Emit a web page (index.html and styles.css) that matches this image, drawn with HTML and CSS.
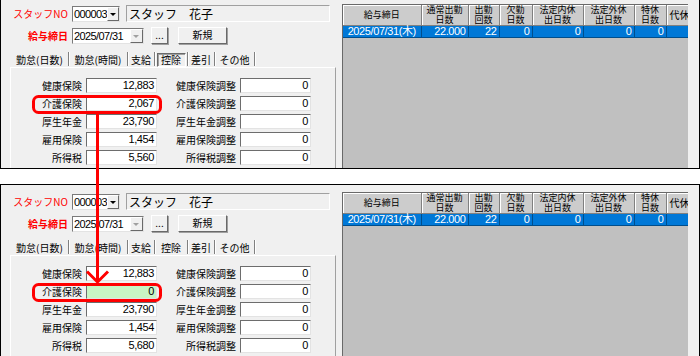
FILE: index.html
```html
<!DOCTYPE html>
<html lang="ja">
<head>
    <meta charset="UTF-8">
    <title>控除の修正</title>
    <link rel="stylesheet" href="styles.css">
</head>
<body>
<div class="shot">

    <!-- 修正前 -->
    <div class="panel panel-cut">
        <div class="form">
            <div class="head-row">
                <span class="req">スタッフNO</span>
                <span class="combo combo-staff"><span class="combo-text num">000003</span><span class="drop"></span></span>
                <span class="name-field">スタッフ　花子</span>
            </div>
            <div class="head-row">
                <span class="req bold">給与締日</span>
                <span class="combo combo-date"><span class="combo-text num">2025/07/31</span><span class="drop off"></span></span>
                <span class="btn btn-dots">...</span>
                <span class="btn btn-new">新規</span>
            </div>
            <div class="tabs">
                <span class="tab t1">勤怠(日数)</span>
                <span class="tab t2">勤怠(時間)</span>
                <span class="tab t3">支給</span>
                <span class="tab t4 on"><span>控除</span></span>
                <span class="tab t5">差引</span>
                <span class="tab t6">その他</span>
            </div>
            <div class="tab-page">
                <span class="lbl">健康保険</span><span class="val num">12,883</span>
                <span class="lbl">健康保険調整</span><span class="val num">0</span>
                <span class="lbl">介護保険</span><span class="val num">2,067</span>
                <span class="lbl">介護保険調整</span><span class="val num">0</span>
                <span class="lbl">厚生年金</span><span class="val num">23,790</span>
                <span class="lbl">厚生年金調整</span><span class="val num">0</span>
                <span class="lbl">雇用保険</span><span class="val num">1,454</span>
                <span class="lbl">雇用保険調整</span><span class="val num">0</span>
                <span class="lbl">所得税</span><span class="val num">5,560</span>
                <span class="lbl">所得税調整</span><span class="val num">0</span>
                <span class="lbl"></span><span class="val num"></span>
            </div>
        </div>
        <div class="grid">
            <table>
                <colgroup>
                    <col style="width:78px"><col style="width:47px"><col style="width:31px"><col style="width:33px">
                    <col style="width:51px"><col style="width:51px"><col style="width:32px"><col style="width:40px">
                </colgroup>
                <tr>
                    <th>給与締日</th><th>通常出勤<br>日数</th><th>出勤<br>回数</th><th>欠勤<br>日数</th>
                    <th>法定内休<br>出日数</th><th>法定外休<br>出日数</th><th>特休<br>日数</th><th class="left">代休</th>
                </tr>
                <tr class="sel">
                    <td class="center">2025/07/31(木)</td><td>22.000</td><td>22</td><td>0</td>
                    <td>0</td><td>0</td><td>0</td><td>0</td>
                </tr>
            </table>
        </div>
    </div>

    <!-- 修正後 -->
    <div class="panel">
        <div class="form">
            <div class="head-row">
                <span class="req">スタッフNO</span>
                <span class="combo combo-staff"><span class="combo-text num">000003</span><span class="drop"></span></span>
                <span class="name-field">スタッフ　花子</span>
            </div>
            <div class="head-row">
                <span class="req bold">給与締日</span>
                <span class="combo combo-date"><span class="combo-text num">2025/07/31</span><span class="drop off"></span></span>
                <span class="btn btn-dots">...</span>
                <span class="btn btn-new">新規</span>
            </div>
            <div class="tabs">
                <span class="tab t1">勤怠(日数)</span>
                <span class="tab t2">勤怠(時間)</span>
                <span class="tab t3">支給</span>
                <span class="tab t4"><span>控除</span></span>
                <span class="tab t5">差引</span>
                <span class="tab t6">その他</span>
            </div>
            <div class="tab-page">
                <span class="lbl">健康保険</span><span class="val num">12,883</span>
                <span class="lbl">健康保険調整</span><span class="val num">0</span>
                <span class="lbl">介護保険</span><span class="val num changed">0</span>
                <span class="lbl">介護保険調整</span><span class="val num">0</span>
                <span class="lbl">厚生年金</span><span class="val num">23,790</span>
                <span class="lbl">厚生年金調整</span><span class="val num">0</span>
                <span class="lbl">雇用保険</span><span class="val num">1,454</span>
                <span class="lbl">雇用保険調整</span><span class="val num">0</span>
                <span class="lbl">所得税</span><span class="val num">5,680</span>
                <span class="lbl">所得税調整</span><span class="val num">0</span>
                <span class="lbl"></span><span class="val num"></span>
            </div>
        </div>
        <div class="grid">
            <table>
                <colgroup>
                    <col style="width:78px"><col style="width:47px"><col style="width:31px"><col style="width:33px">
                    <col style="width:51px"><col style="width:51px"><col style="width:32px"><col style="width:40px">
                </colgroup>
                <tr>
                    <th>給与締日</th><th>通常出勤<br>日数</th><th>出勤<br>回数</th><th>欠勤<br>日数</th>
                    <th>法定内休<br>出日数</th><th>法定外休<br>出日数</th><th>特休<br>日数</th><th class="left">代休</th>
                </tr>
                <tr class="sel">
                    <td class="center">2025/07/31(木)</td><td>22.000</td><td>22</td><td>0</td>
                    <td>0</td><td>0</td><td>0</td><td>0</td>
                </tr>
            </table>
        </div>
    </div>

    <!-- 赤枠と矢印 -->
    <svg class="marks" width="700" height="356" viewBox="0 0 700 356">
        <rect x="33.5" y="96.5" width="127" height="16" rx="5" fill="none" stroke="#f00" stroke-width="3"/>
        <rect x="33.5" y="284.5" width="127" height="16" rx="5" fill="none" stroke="#f00" stroke-width="3"/>
        <line x1="97.5" y1="114" x2="97.5" y2="281" stroke="#f00" stroke-width="3"/>
        <polyline points="87,271.5 97.5,282 108,271.5" fill="none" stroke="#f00" stroke-width="3"/>
    </svg>
</div>
</body>
</html>
```

FILE: styles.css
```css
* {
    box-sizing: border-box;
}

body {
    margin: 0;
    background: #fff;
    font-family: "Noto Sans CJK JP", sans-serif;
    font-size: 10px;
    color: #000;
}

.shot {
    position: relative;
    width: 700px;
    height: 356px;
    overflow: hidden;
}

/* パネル */
.panel {
    display: flex;
    height: 173px;
    border: 1px solid #000;
    background: #f0f0f0;
    overflow: hidden;
    padding-top: 7px;
}

.panel-cut {
    margin-top: -4px;
}

.panel + .panel {
    margin-top: 15px;
}

.form {
    width: 335px;
    flex: none;
    padding-top: 1px;
    display: flex;
    flex-direction: column;
}

.num {
    font-family: "Liberation Sans", sans-serif;
    font-size: 11px;
    letter-spacing: -0.4px;
}

/* ヘッダ部 */
.head-row {
    display: flex;
    align-items: center;
    height: 17px;
}

.head-row + .head-row {
    margin-top: 5px;
}

.req {
    width: 67px;
    margin-right: 4px;
    text-align: right;
    color: #f00;
}

.bold {
    font-weight: bold;
}

.combo {
    display: flex;
    height: 16px;
    background: #fff;
    border: 1px solid;
    border-color: #7a7a7a #e3e3e3 #e3e3e3 #7a7a7a;
}

.combo-staff {
    width: 48px;
}

.combo-date {
    width: 72px;
}

.combo-text {
    flex: 1;
    padding-left: 1px;
    line-height: 14px;
    letter-spacing: -0.6px;
    white-space: nowrap;
}

.drop {
    width: 12px;
    flex: none;
    background: #f0f0f0;
    border: 1px solid;
    border-color: #fff #696969 #696969 #fff;
    position: relative;
}

.drop::after {
    content: "";
    position: absolute;
    left: 2px;
    top: 5px;
    border-left: 3px solid transparent;
    border-right: 3px solid transparent;
    border-top: 3px solid #000;
}

.drop.off::after {
    border-top-color: #a0a0a0;
}

.combo-date .drop {
    width: 13px;
}

.name-field {
    width: 204px;
    height: 17px;
    margin-left: 6px;
    padding-left: 2px;
    border: 1px solid;
    border-color: #a0a0a0 #fff #fff #a0a0a0;
    font-size: 12px;
    line-height: 15px;
}

.btn {
    height: 17px;
    background: #f0f0f0;
    border: 1px solid;
    border-color: #fff #696969 #696969 #fff;
    box-shadow: 1px 1px 0 #a0a0a0;
    text-align: center;
    line-height: 14px;
}

.btn-dots {
    width: 17px;
    margin-left: 7px;
}

.btn-new {
    width: 49px;
    margin-left: 10px;
}

/* タブ */
.tabs {
    display: flex;
    height: 16px;
    margin-top: 7px;
    margin-left: 10px;
}

.tab {
    display: flex;
    align-items: center;
    justify-content: center;
    border-right: 1px solid #808080;
    box-shadow: 1px 0 0 #fff;
    margin: 1px 0;
    padding-top: 1px;
}

.t1 { width: 58px; }
.t2 { width: 59px; }
.t3 { width: 27px; }
.t4 { width: 33px; }
.t5 { width: 27px; }
.t6 { width: 40px; }

.tab > span {
    display: block;
    width: 29px;
    height: 14px;
    line-height: 12px;
    text-align: center;
    border: 1px solid transparent;
}

.tab.on > span {
    border-color: #696969 #fff #fff #696969;
    box-shadow: inset 1px 1px 0 #a0a0a0;
}

.tab-page {
    flex: 1;
    width: 326px;
    margin-left: 9px;
    border: 1px solid;
    border-color: #fff #a0a0a0 #a0a0a0 #fff;
    padding-top: 10px;
    display: grid;
    grid-template-columns: 71px 71px 75px 71px;
    grid-auto-rows: 15px;
    column-gap: 4px;
    row-gap: 3px;
}

.lbl {
    text-align: right;
    line-height: 15px;
}

.val {
    background: #fff;
    border: 1px solid;
    border-color: #6d6d6d #e3e3e3 #e3e3e3 #6d6d6d;
    text-align: right;
    padding-right: 2px;
    line-height: 13px;
}

.val.changed {
    background: #c8f5c4;
}

/* 一覧 */
.grid {
    width: 346px;
    margin-left: 6px;
    flex: none;
    background: #c0c0c0;
    border-left: 1px solid #696969;
    border-top: 1px solid #696969;
    overflow: hidden;
}

.grid table {
    border-collapse: collapse;
    table-layout: fixed;
    width: 363px;
}

.grid th {
    height: 20px;
    padding: 0;
    background: #cccccc;
    border-right: 1px solid #808080;
    border-bottom: 1px solid #808080;
    box-shadow: inset 1px 1px 0 #fff;
    font-weight: normal;
    font-size: 9px;
    line-height: 10px;
    text-align: center;
    white-space: nowrap;
}

.grid th.left {
    text-align: left;
    padding-left: 3px;
    font-size: 10px;
}

.grid td {
    height: 12px;
    padding: 0 2px;
    background: #0078d7;
    color: #fff;
    border-right: 1px solid #004e8c;
    border-bottom: 1px solid #004e8c;
    text-align: right;
    font-family: "Liberation Sans", "Noto Sans CJK JP", sans-serif;
    font-size: 11px;
    letter-spacing: -0.4px;
    line-height: 11px;
    white-space: nowrap;
}

.grid td.center {
    text-align: center;
    padding: 0;
}

/* 注記 */
.marks {
    position: absolute;
    left: 0;
    top: 0;
    pointer-events: none;
}
```
